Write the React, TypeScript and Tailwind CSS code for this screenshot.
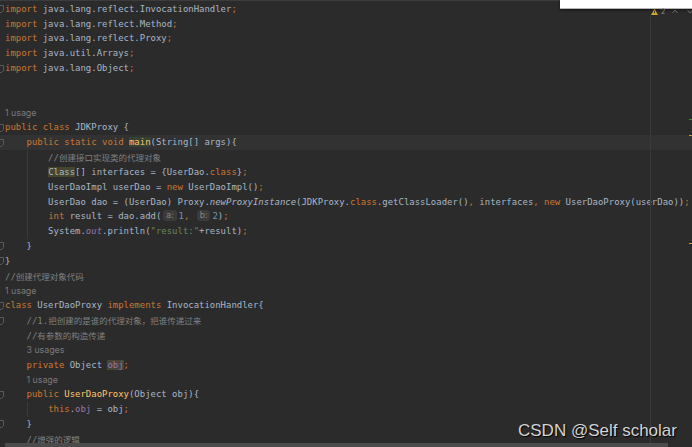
import React from "react";

type Tok = [string, string];
type Line =
  | { kind: "code"; toks: Tok[]; current?: boolean }
  | { kind: "usage"; text: string; indent: number }
  | { kind: "blank" };

const K = "text-[#cc7832]";
const I = "text-[#a9b7c6]";
const C = "text-[#808080]";
const S = "text-[#6a8759]";
const N = "text-[#6897bb]";
const F = "text-[#ffc66d]";
const P = "text-[#9876aa]";

const code = (toks: Tok[], current?: boolean): Line => ({ kind: "code", toks, current });
const usage = (text: string, indent: number): Line => ({ kind: "usage", text, indent });

const lines: Line[] = [
  code([["import", K], [" java.lang.reflect.InvocationHandler", I], [";", K]]),
  code([["import", K], [" java.lang.reflect.Method", I], [";", K]]),
  code([["import", K], [" java.lang.reflect.Proxy", I], [";", K]]),
  code([["import", K], [" java.util.Arrays", I], [";", K]]),
  code([["import", K], [" java.lang.Object", I], [";", K]]),
  { kind: "blank" },
  { kind: "blank" },
  usage("1 usage", 0),
  code([["public class", K], [" JDKProxy {", I]]),
  code(
    [
      ["    public static void", K],
      [" ", I],
      ["main", "text-[#ffc66d] bg-[#344134]"],
      ["(String[] args){", I],
    ],
    true
  ),
  code([["        //", C], ["创建接口实现类的代理对象", "cjk " + C]]),
  code([
    ["        ", I],
    ["Class", "text-[#a9b7c6] bg-[#46462e]"],
    ["[] interfaces = {UserDao.", I],
    ["class", K],
    ["}", I],
    [";", K],
  ]),
  code([["        UserDaoImpl userDao = ", I], ["new", K], [" UserDaoImpl()", I], [";", K]]),
  code([
    ["        UserDao dao = (UserDao) Proxy.", I],
    ["newProxyInstance", "italic " + I],
    ["(JDKProxy.", I],
    ["class", K],
    [".getClassLoader()", I],
    [",", K],
    [" interfaces", I],
    [",", K],
    [" new", K],
    [" UserDaoProxy(userDao))", I],
    [";", K],
  ]),
  code([
    ["        ", I],
    ["int", K],
    [" result = dao.add(", I],
    ["a:", "hint"],
    ["1", N],
    [",", K],
    [" ", I],
    ["b:", "hint"],
    ["2", N],
    [")", I],
    [";", K],
  ]),
  code([
    ["        System.", I],
    ["out", "italic " + P],
    [".println(", I],
    ['"result:"', S],
    ["+result)", I],
    [";", K],
  ]),
  code([["    }", I]]),
  code([["}", I]]),
  code([["//", C], ["创建代理对象代码", "cjk " + C]]),
  usage("1 usage", 0),
  code([["class", K], [" UserDaoProxy ", I], ["implements", K], [" InvocationHandler{", I]]),
  code([["    //1.", C], ["把创建的是谁的代理对象，把谁传递过来", "cjk " + C]]),
  code([["    //", C], ["有参数的构造传递", "cjk " + C]]),
  usage("3 usages", 1),
  code([["    private", K], [" Object ", I], ["obj", "text-[#9876aa] bg-[#4a4436]"], [";", K]]),
  usage("1 usage", 1),
  code([["    public", K], [" ", I], ["UserDaoProxy", F], ["(Object obj){", I]]),
  code([["        ", I], ["this", K], [".", I], ["obj", P], [" = obj", I], [";", K]]),
  code([["    }", I]]),
  code([["    //", C], ["增强的逻辑", "cjk " + C]]),
];

const foldLines = new Set([0, 4, 8, 9, 16, 17, 20, 21, 26, 28]);
const guideLines = new Set([10, 11, 12, 13, 14, 15, 27]);

function Tokens({ toks }: { toks: Tok[] }) {
  return (
    <>
      {toks.map(([t, cls], i) => {
        if (cls === "hint") {
          return (
            <span
              key={i}
              className="inline-block align-middle h-[11px] leading-[11px] px-[3px] mx-[2px] rounded-[3px] bg-[#3b3b3b] text-[#858585] text-[8.5px] font-['Inter',sans-serif] -mt-[2px]"
            >
              {t}
            </span>
          );
        }
        if (cls.startsWith("cjk ")) {
          return (
            <span key={i} className={cls.slice(4) + " text-[8.5px] font-['Noto_Sans_CJK_SC',sans-serif]"}>
              {t}
            </span>
          );
        }
        return (
          <span key={i} className={cls}>
            {t}
          </span>
        );
      })}
    </>
  );
}

function Fold() {
  return (
    <svg width="5" height="8" viewBox="0 0 5 8">
      <path d="M-1 0.5 H3.5 V5.5 L1.5 7.5 H-1" fill="none" stroke="#5a5a5a" strokeWidth="1" />
    </svg>
  );
}

export default function App() {
  return (
    <div className="relative w-[692px] h-[447px] overflow-hidden bg-[#2b2b2b] font-['DejaVu_Sans_Mono',monospace] text-[8.96px]">
      <div className="w-[560px] h-px bg-[#3c3c3c]" />
      <div className="flex flex-col pt-[0.8px]">
        {lines.map((ln, idx) => (
          <div
            key={idx}
            className={
              "flex h-[14.83px] items-center " + (ln.kind === "code" && ln.current ? "bg-[#323232]" : "")
            }
          >
            <div className="w-[5px] shrink-0 flex items-center h-full">{foldLines.has(idx) ? <Fold /> : null}</div>
            {ln.kind === "usage" ? (
              <div
                className={
                  "leading-[14.83px] text-[8.8px] text-[#7a7a7a] font-['Inter',sans-serif] " +
                  (ln.indent === 1 ? "pl-[21.5px]" : "")
                }
              >
                {ln.text}
              </div>
            ) : ln.kind === "code" ? (
              <div className="relative leading-[14.83px] whitespace-pre h-full">
                {guideLines.has(idx) ? <div className="absolute left-[21.5px] top-0 w-px h-full bg-[#393939]" /> : null}
                <Tokens toks={ln.toks} />
              </div>
            ) : null}
          </div>
        ))}
      </div>

      {/* right margin guide */}
      <div className="absolute left-[650px] top-[17px] w-px h-[430px] bg-[#3a3a3a]" />

      {/* right-edge error stripe markers */}
      <div className="absolute right-0 top-[119px] w-[3px] h-px bg-[#3e8a3e]" />
      <div className="absolute right-0 top-[135px] w-[3px] h-px bg-[#c8a030]" />
      <div className="absolute right-0 top-[243px] w-[3px] h-px bg-[#c8a030]" />

      {/* top-right popup & inspection widget */}
      <div className="absolute right-0 top-0 w-[132px] h-[9px] bg-white border-b border-[#b8b8b8] shadow-[0_1px_3px_rgba(0,0,0,0.6)]" />
      <div className="absolute left-[651px] top-[8px] flex items-center h-[7px]">
        <svg width="7" height="6" viewBox="0 0 7 6">
          <path d="M3.5 0 L7 6 H0 Z" fill="#d6a72b" />
          <rect x="3" y="1.8" width="1" height="2.4" fill="#3a2e10" />
        </svg>
        <span className="ml-[3px] text-[7px] leading-[7px] text-[#8a8a8a] font-['Inter',sans-serif]">2</span>
        <svg className="ml-[7px]" width="6" height="5" viewBox="0 0 6 5">
          <path d="M0.5 4 L3 1 L5.5 4" fill="none" stroke="#6a6a6a" strokeWidth="1" />
        </svg>
        <svg className="ml-[9px]" width="6" height="5" viewBox="0 0 6 5">
          <path d="M0.5 1 L3 4 L5.5 1" fill="none" stroke="#6a6a6a" strokeWidth="1" />
        </svg>
      </div>

      {/* horizontal scrollbar */}
      <div className="absolute left-[5px] bottom-0 w-[663px] h-[4px] bg-[#4b4b4b]" />

      {/* watermark */}
      <div className="absolute left-[518px] top-[422px] text-[17px] leading-[17px] text-[#d4d4d4] font-['Liberation_Sans',Arial,sans-serif] [text-shadow:1px_1px_1px_#000] whitespace-nowrap">
        CSDN @Self scholar
      </div>
    </div>
  );
}
